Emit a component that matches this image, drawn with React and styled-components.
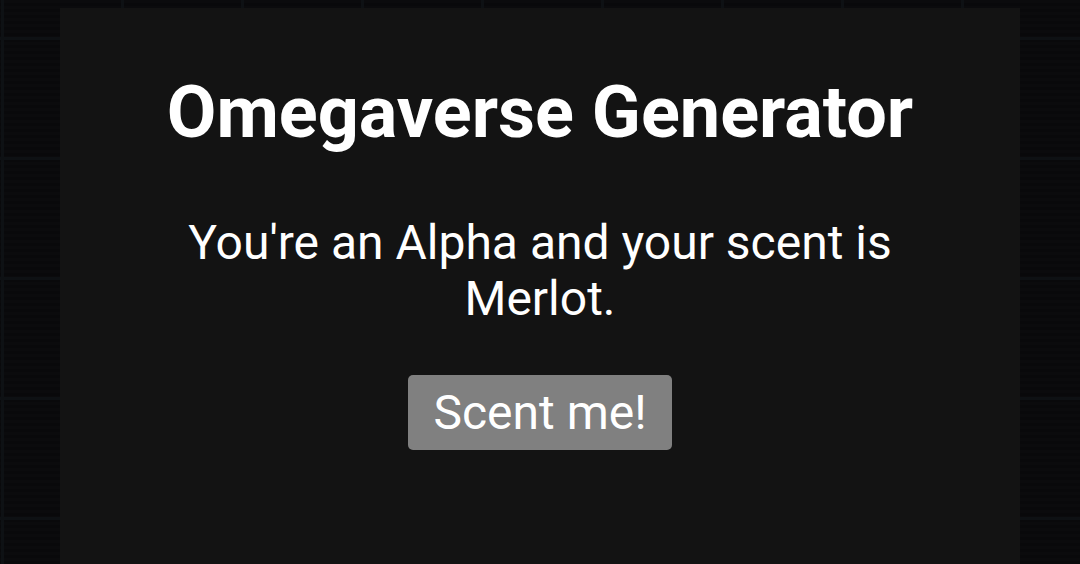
import React, { useState } from "react";
import styled, { createGlobalStyle } from "styled-components";

const GlobalStyle = createGlobalStyle`
  html, body {
    margin: 0;
    padding: 0;
    height: 100%;
  }
  body {
    font-family: Roboto, "Liberation Sans", Arial, sans-serif;
    color: #ffffff;
    background-color: #0a0a0c;
    background-image:
      linear-gradient(to right, #0e1114 0, #0e1114 3px, transparent 3px),
      linear-gradient(to bottom, #0e1114 0, #0e1114 3px, transparent 3px),
      repeating-linear-gradient(to bottom, #0b0b0d 0, #0b0b0d 3px, #09090b 3px, #09090b 6px);
    background-size: 120px 120px, 120px 120px, auto;
    background-position: 1px 37px, 1px 37px, 0 0;
  }
`;

const Page = styled.div`
  min-height: 564px;
  display: flex;
  justify-content: center;
  padding-top: 8px;
  box-sizing: border-box;
`;

const Card = styled.main`
  width: 960px;
  min-height: 556px;
  background: #131313;
  display: flex;
  flex-direction: column;
  align-items: center;
  text-align: center;
  padding: 62px 40px 40px;
  box-sizing: border-box;
`;

const Title = styled.h1`
  margin: 0;
  font-size: 72px;
  font-weight: 700;
  line-height: 1.2;
`;

const Result = styled.p`
  margin: 59px 0 0;
  font-size: 48px;
  font-weight: 400;
  line-height: 56px;
  max-width: 760px;
`;

const ScentButton = styled.button`
  margin-top: 48px;
  background: #808080;
  color: #ffffff;
  border: none;
  border-radius: 5px;
  font-family: Roboto, "Liberation Sans", Arial, sans-serif;
  font-size: 48px;
  padding: 0 25px;
  height: 75px;
  cursor: pointer;
`;

const scents = ["Merlot", "Vanilla", "Cedarwood", "Rain", "Cinnamon"];
const ranks = ["an Alpha", "a Beta", "an Omega"];

export default function App() {
  const [rank, setRank] = useState(ranks[0]);
  const [scent, setScent] = useState(scents[0]);

  const scentMe = () => {
    setRank(ranks[Math.floor(Math.random() * ranks.length)]);
    setScent(scents[Math.floor(Math.random() * scents.length)]);
  };

  return (
    <>
      <GlobalStyle />
      <Page>
        <Card>
          <Title>Omegaverse Generator</Title>
          <Result>
            You're {rank} and your scent is {scent}.
          </Result>
          <ScentButton onClick={scentMe}>Scent me!</ScentButton>
        </Card>
      </Page>
    </>
  );
}
